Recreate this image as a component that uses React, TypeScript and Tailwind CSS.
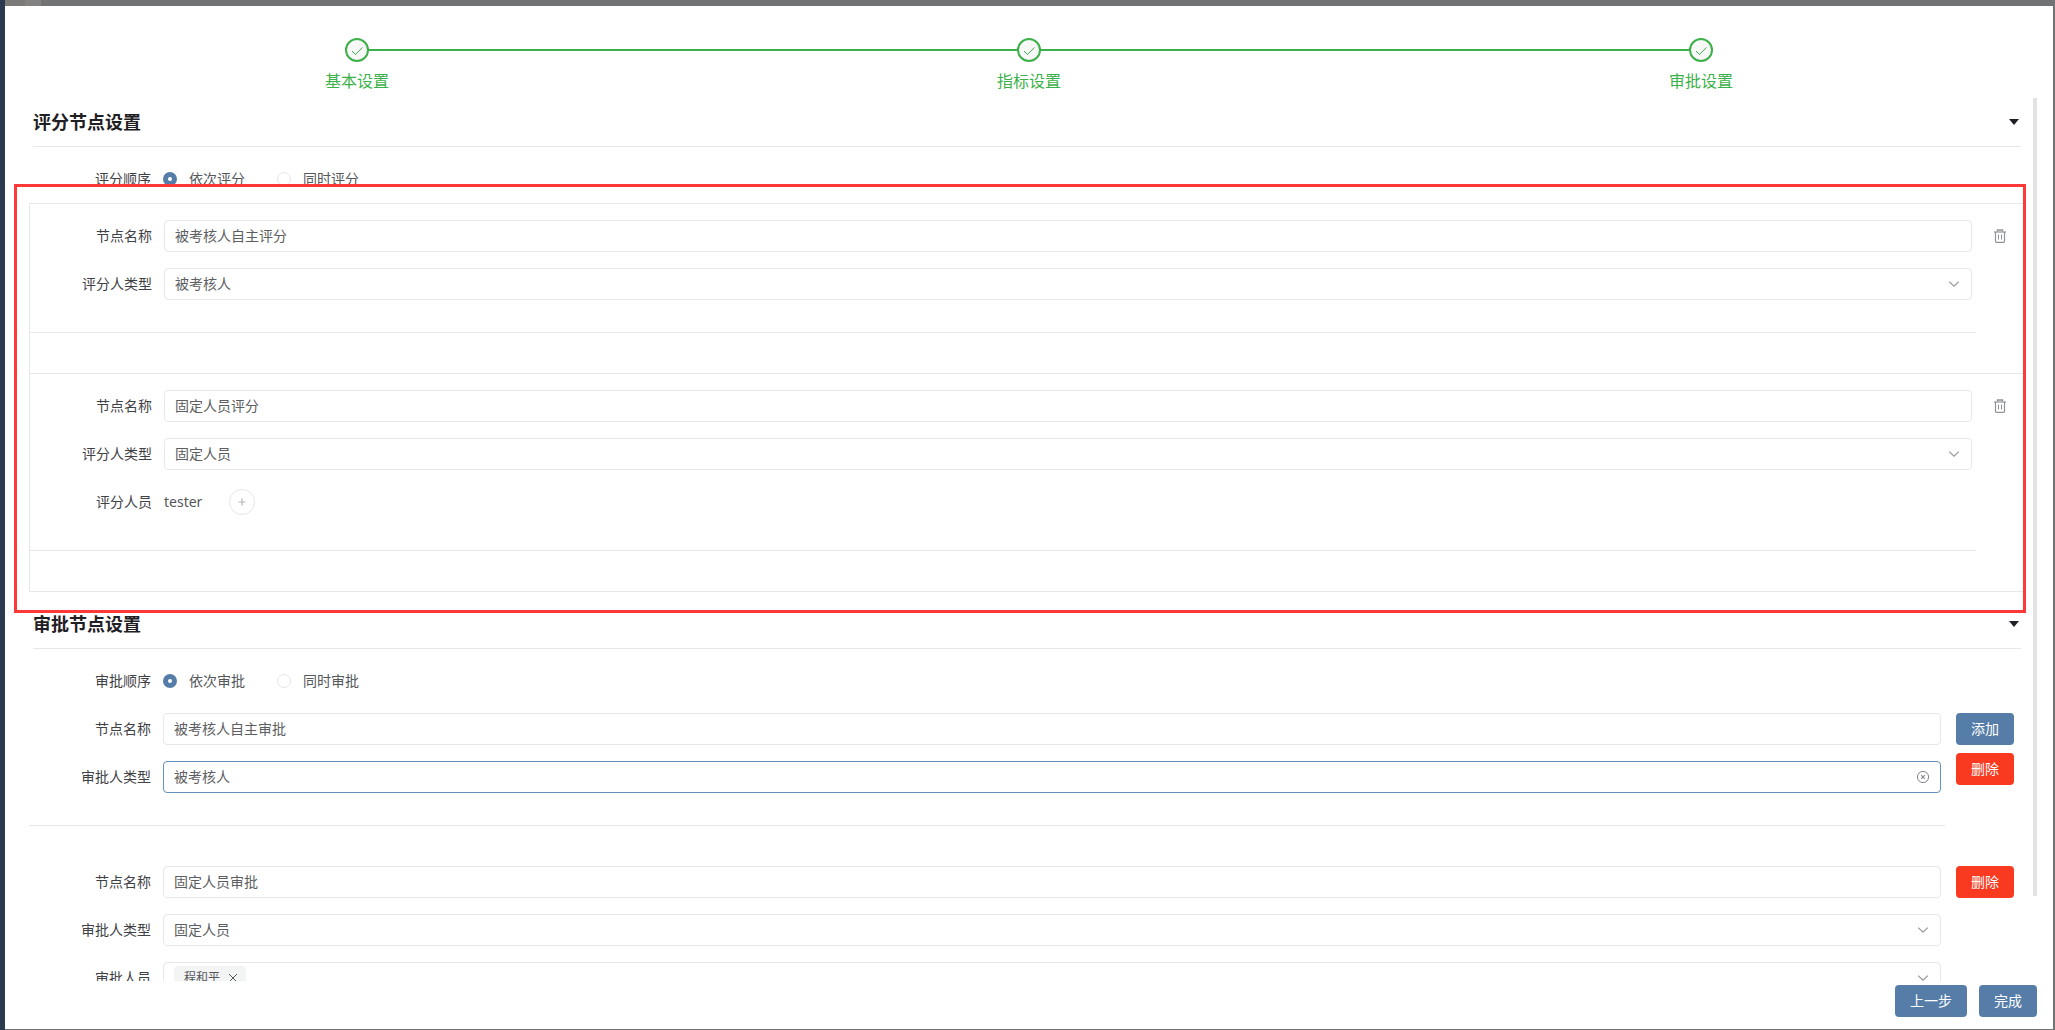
import type { ReactNode } from 'react';

const inputBase =
  'block h-8 w-full rounded border bg-white px-2.5 text-sm text-[#5c5e61] outline-none';

function Chevron() {
  return (
    <svg className="pointer-events-none h-3.5 w-3.5" viewBox="0 0 14 14" fill="none" stroke="#9a9a9c" strokeWidth="1.3">
      <path d="M2.2 4.6 7 9.2l4.8-4.6" />
    </svg>
  );
}

function CircleClose() {
  return (
    <svg className="pointer-events-none h-3.5 w-3.5" viewBox="0 0 14 14" fill="none" stroke="#85878c">
      <circle cx="7" cy="7" r="5.6" />
      <path d="m5.2 5.2 3.6 3.6M8.8 5.2 5.2 8.8" strokeWidth="1.1" />
    </svg>
  );
}

function Trash() {
  return (
    <svg className="h-3.5 w-3.5" viewBox="0 0 14 14" fill="none" stroke="#919398">
      <path d="M1 3h12" strokeWidth="1.2" />
      <path d="M4.5 2.5V1h5v1.5" strokeWidth="1.4" />
      <path d="M2.5 3v9.2c0 .6.4 1.1 1 1.1h7c.6 0 1-.5 1-1.1V3" strokeWidth="1.2" />
      <path d="M5.5 5.5v5M8.5 5.5v5" />
    </svg>
  );
}

function Step({ title, last }: { title: string; last?: boolean }) {
  return (
    <li className="relative flex flex-col items-center">
      {!last && <span className="absolute top-[11px] left-1/2 h-0.5 w-full bg-[#3cb149]" />}
      <span className="relative flex h-6 w-6 items-center justify-center rounded-full border-2 border-[#3cb149] bg-[#f8f8f8]">
        <svg className="h-3.5 w-3.5" viewBox="0 0 14 14" fill="none" stroke="#3cb149">
          <path d="m2 8 3.5 3.6L12.5 4.4" />
        </svg>
      </span>
      <span className="mt-[7px] text-base leading-6 text-[#3cb149]">{title}</span>
    </li>
  );
}

function SectionTitle({ children }: { children: ReactNode }) {
  return (
    <div className="mx-1 flex h-[49px] items-center justify-between border-b border-[#e6e7e7]">
      <h2 className="text-lg font-bold text-[#1f2023]">{children}</h2>
      <button type="button" aria-label="收起" className="mr-0.5 flex h-6 items-center">
        <svg className="h-1.5 w-2.5" viewBox="0 0 10 6" fill="#1f2023">
          <path d="M0 0h10L5 6z" />
        </svg>
      </button>
    </div>
  );
}

function Row({ label, id, children }: { label: string; id?: string; children: ReactNode }) {
  return (
    <div className="mb-4 flex">
      <label htmlFor={id} className="w-[134px] shrink-0 pr-3 text-right text-sm leading-8 text-[#3f4145]">
        {label}
      </label>
      <div className="min-w-0 flex-1 pr-1">{children}</div>
    </div>
  );
}

function TextRow({ label, id, value }: { label: string; id: string; value: string }) {
  return (
    <Row label={label} id={id}>
      <input id={id} type="text" defaultValue={value} className={`${inputBase} border-[#e6e7e7] pb-0.5`} />
    </Row>
  );
}

function SelectRow({ label, id, value, active }: { label: string; id: string; value: string; active?: boolean }) {
  return (
    <Row label={label} id={id}>
      <div className="relative">
        <select
          id={id}
          defaultValue={value}
          className={`${inputBase} appearance-none ${active ? 'border-[#6492c0]' : 'border-[#e6e7e7]'}`}
        >
          <option>被考核人</option>
          <option>固定人员</option>
        </select>
        <span className="pointer-events-none absolute inset-y-0 right-[11px] flex items-center">
          {active ? <CircleClose /> : <Chevron />}
        </span>
      </div>
    </Row>
  );
}

function RadioRow({ label, name, options }: { label: string; name: string; options: string[] }) {
  return (
    <div role="radiogroup" aria-labelledby={name} className="flex h-8 items-center text-sm text-[#55575b]">
      <span id={name} className="w-[134px] shrink-0 pr-3 text-right text-[#3f4145]">
        {label}
      </span>
      <span className="flex gap-8">
        {options.map((o, i) => (
          <label key={o} className="flex items-center gap-3">
            <input
              type="radio"
              name={name}
              defaultChecked={i === 0}
              className="h-3.5 w-3.5 appearance-none rounded-full border border-[#e6e7e7] bg-white checked:border-5 checked:border-[#567da8]"
            />
            {o}
          </label>
        ))}
      </span>
    </div>
  );
}

function ScoreNode({ children, last }: { children: ReactNode; last?: boolean }) {
  return (
    <div className={`flex border-x border-t border-[#e6e7e7] pt-4 ${last ? 'border-b' : ''}`}>
      <div className="min-w-0 flex-1 pb-10">
        {children}
        <hr className="mt-8 border-[#e6e7e7]" />
      </div>
      <div className="flex h-8 w-12 items-center justify-center">
        <button type="button" aria-label="删除节点">
          <Trash />
        </button>
      </div>
    </div>
  );
}

function Button({ children, danger }: { children: ReactNode; danger?: boolean }) {
  return (
    <button type="button" className={`h-8 rounded px-[15px] text-sm text-white ${danger ? 'bg-[#fa3a20]' : 'bg-[#567da8]'}`}>
      {children}
    </button>
  );
}

export default function App() {
  return (
    <div className="flex h-screen bg-[#717274] font-['Noto_Sans','Noto_Sans_CJK_SC',sans-serif]">
      <div className="w-[5px] shrink-0 bg-[#2a3b51]" />
      <div className="flex min-w-0 flex-1 flex-col pr-0.5 pb-px">
        <div className="flex h-1.5 shrink-0">
          <span className="w-5 bg-[#7b7a79]" />
          <span className="w-4 bg-[#838281]" />
        </div>
        <div className="flex min-h-0 flex-1 flex-col bg-white">
          <ol className="grid h-[92px] shrink-0 grid-cols-3 px-4 pt-8">
            <Step title="基本设置" />
            <Step title="指标设置" />
            <Step title="审批设置" last />
          </ol>

          <main className="relative min-h-0 flex-1 overflow-hidden pr-7 pl-6">
            <SectionTitle>评分节点设置</SectionTitle>
            <div className="mt-4 mb-2">
              <RadioRow label="评分顺序" name="score-order" options={['依次评分', '同时评分']} />
            </div>
            <div className="relative mb-2">
              <ScoreNode>
                <TextRow label="节点名称" id="s1-name" value="被考核人自主评分" />
                <SelectRow label="评分人类型" id="s1-type" value="被考核人" />
              </ScoreNode>
              <ScoreNode last>
                <TextRow label="节点名称" id="s2-name" value="固定人员评分" />
                <SelectRow label="评分人类型" id="s2-type" value="固定人员" />
                <Row label="评分人员" id="s2-add">
                  <div className="flex h-8 items-center gap-[27px] text-sm text-[#55575b]">
                    <span>tester</span>
                    <button
                      id="s2-add"
                      type="button"
                      aria-label="添加评分人员"
                      className="flex h-[26px] w-[26px] items-center justify-center rounded-full border border-[#e6e7e7]"
                    >
                      <svg className="h-2 w-2" viewBox="0 0 8 8" stroke="#b4b6ba" strokeWidth="1.2">
                        <path d="M4 .5v7M.5 4h7" />
                      </svg>
                    </button>
                  </div>
                </Row>
              </ScoreNode>
              <div className="pointer-events-none absolute -top-[19px] -right-px -bottom-[21px] -left-[15px] border-3 border-[#ff3838]" />
            </div>

            <SectionTitle>审批节点设置</SectionTitle>
            <div className="my-4">
              <RadioRow label="审批顺序" name="approve-order" options={['依次审批', '同时审批']} />
            </div>
            <div className="flex">
              <div className="min-w-0 flex-1 pb-10">
                <TextRow label="节点名称" id="a1-name" value="被考核人自主审批" />
                <SelectRow label="审批人类型" id="a1-type" value="被考核人" active />
                <hr className="mt-8 border-[#e6e7e7]" />
              </div>
              <div className="flex w-20 flex-col items-center gap-2">
                <Button>添加</Button>
                <Button danger>删除</Button>
              </div>
            </div>
            <div className="flex">
              <div className="min-w-0 flex-1">
                <TextRow label="节点名称" id="a2-name" value="固定人员审批" />
                <SelectRow label="审批人类型" id="a2-type" value="固定人员" />
                <Row label="审批人员" id="a2-people">
                  <div className="flex h-8 items-center rounded border border-[#e6e7e7] px-2.5">
                    <span className="flex h-6 items-center gap-2 rounded bg-[#f3f5f5] pr-2 pl-2.5 text-xs text-[#55575b]">
                      程和平
                      <button type="button" aria-label="移除程和平">
                        <svg className="h-2.5 w-2.5" viewBox="0 0 10 10" stroke="#55575b">
                          <path d="m1 1 8 8M9 1 1 9" />
                        </svg>
                      </button>
                    </span>
                    <input id="a2-people" type="text" className="min-w-0 flex-1 outline-none" />
                    <Chevron />
                  </div>
                </Row>
              </div>
              <div className="flex w-20 flex-col items-center">
                <Button danger>删除</Button>
              </div>
            </div>
            <div className="absolute top-0 right-4 h-[90.4%] w-1 bg-[#e3e3e3]" />
          </main>

          <footer className="flex shrink-0 justify-end gap-3 px-4 pt-1 pb-3">
            <Button>上一步</Button>
            <Button>完成</Button>
          </footer>
        </div>
      </div>
    </div>
  );
}
